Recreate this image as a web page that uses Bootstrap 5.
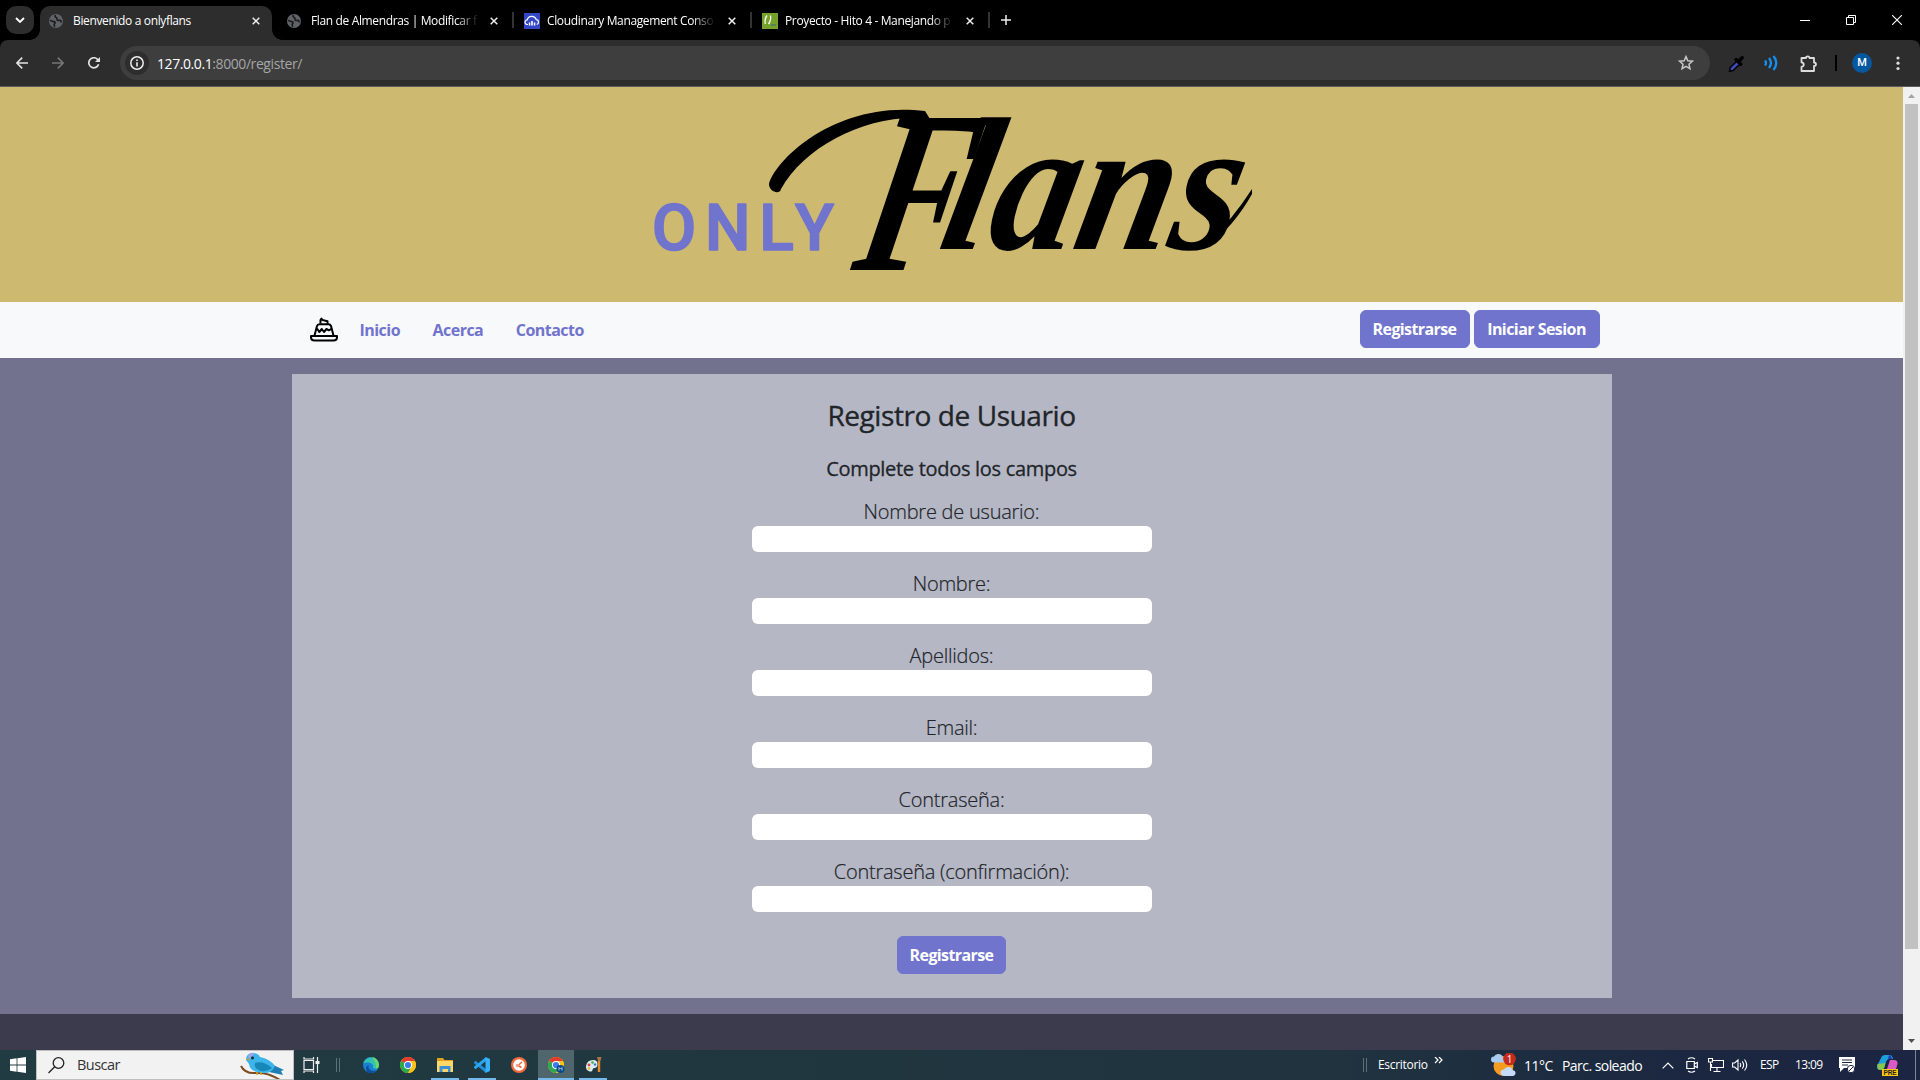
<!DOCTYPE html>
<html lang="es">
<head>
<meta charset="utf-8">
<meta name="viewport" content="width=device-width, initial-scale=1">
<title>Bienvenido a onlyflans</title>
<link href="https://cdn.jsdelivr.net/npm/bootstrap@5.3.0/dist/css/bootstrap.min.css" rel="stylesheet">
<style>
body{font-family:"Open Sans","Noto Sans",sans-serif;width:1920px;height:1080px;overflow:hidden;background:#000}
svg{display:block;flex:none}
/* browser tabs */
.tabstrip{height:40px;padding-left:6px;background:#000;color:#fff}
.tabsearch{width:28px;height:28px;margin:6px 6px 0 0;border-radius:10px;background:#2d2d2d}
.btab{position:relative;width:232px;height:34px;margin:6px 6px 0 0;padding:0 0 5px 9px;font-size:12px}
.btab.on{background:#2d2d2d;border-radius:10px 10px 0 0}
.btab.on::before,.btab.on::after{content:"";position:absolute;bottom:0;width:10px;height:10px}
.btab.on::before{left:-10px;background:radial-gradient(circle at 0 0,transparent 9.5px,#2d2d2d 10px)}
.btab.on::after{right:-10px;background:radial-gradient(circle at 100% 0,transparent 9.5px,#2d2d2d 10px)}
.btab.rule::after{content:"";position:absolute;right:-4px;top:6px;width:2px;height:16px;background:#333}
.btab.wide-ico{padding-left:8px}
.btab.wide-ico .ttl{margin-left:7px;width:169px}
.ttl{width:167px;margin:0 12px 0 10px;white-space:nowrap;overflow:hidden;letter-spacing:-.36px}
.fade-end{-webkit-mask-image:linear-gradient(90deg,#000 145px,transparent 168px)}
.newtab{margin:15px 0 0 9px}
.wctl{width:46px;padding-top:15px}
.wctl.low{padding-top:20px}
/* toolbar */
.toolbar{height:47px;background:#2d2d2d;border-bottom:1px solid #5c5c5c;border-radius:8px 8px 0 0;padding-left:16px}
.navico{margin-right:24px}
.pill{width:1590px;height:34px;border-radius:17px;background:#3e3e3e;padding:0 16px 0 5px;font-size:14px;letter-spacing:-.42px;color:#a5a5a5;margin-left:-4px;margin-right:18px}
.info{width:24px;height:24px;border-radius:50%;background:#2d2d2d;margin-right:8px}
.vline{width:2px;height:16px;background:#000;margin:0 15px 0 17px}
.ava{width:20px;height:20px;border-radius:50%;background:#0458a0;color:#fff;font:500 11px/20px Roboto,sans-serif;margin-right:24px}
/* page */
.viewport{height:963px}
.pagecol{width:1903px}
.hero{height:215px;background:#cdb970}
.sitenav{height:56px;background:#f8f9fa;padding:8px 0}
.flan{margin:-2px 22px 0 18px}
.sitenav .links{gap:32.5px}
.sitenav .nav-link{color:#7074cd;font-weight:700;padding:8px 0;letter-spacing:-.53px}
.sitenav .acts{gap:4px;margin:-2px 12px 0 0}
.inner{width:1320px}
.btn-of,.btn-of:hover{background:#7074cd;color:#fff;font-weight:700;border-color:#7074cd;padding-left:0;padding-right:0;width:109px;letter-spacing:-.6px}
.acts .btn-of{width:110px}
.acts .btn-of.long{width:126px;letter-spacing:-.55px}
.pagemain{height:656px;background:#72728e;padding:16px 0}
.panel{height:624px;background:#b5b7c5;padding:25px 0 24px;color:#212529}
.panel h3{font-size:28px;margin-bottom:24px;letter-spacing:-.42px;-webkit-text-stroke:.35px #212529}
.panel h5{font-size:20px;margin-bottom:15px;line-height:24px;letter-spacing:-.3px;-webkit-text-stroke:.3px #212529}
.fld{height:56px;margin-bottom:16px;font-size:20px;font-weight:300;letter-spacing:-.24px;-webkit-text-stroke:.2px #212529}
.fld label{height:30px;line-height:32px}
.fld input{width:400px;height:26px;border:0;border-radius:6px;background:#fff}
.fld:last-of-type{margin-bottom:24px}
.foot{height:36px;background:#3c3b4d}
.vbar{width:17px;background:#f1f1f1;padding:7px 2px}
.thumb{width:13px;height:845px;background:#c1c1c1;margin-top:6px}
/* taskbar */
.taskbar{height:30px;background:linear-gradient(90deg,#213b43,#20373f 35%,#20333f 70%,#1b2741 88%,#1c2542);color:#fff}
.start{width:36px}
.find{width:258px;height:30px;background:#f2f2f2;border:1px solid #bfbfbf;color:#333;font-size:14.5px;letter-spacing:-.55px;padding:0 8px 0 11px}
.find span{margin-left:12px}
.tview{margin:0 16px 0 9px}
.apps{margin-left:13px;gap:1px}
.app{width:36px;height:30px}
.app.run{background:linear-gradient(#76b9ed,#76b9ed) bottom/28px 2px no-repeat}
.app.act{background:linear-gradient(#76b9ed,#76b9ed) bottom/36px 2px no-repeat #50666d}
.grip{width:4px;height:14px;border:solid #5c7078;border-width:0 1px}
.tray{white-space:nowrap;font-size:12px}
.tray .desk{width:57px;margin-left:11px;letter-spacing:-.3px}
.more{margin:-10px 0 0 -1px}
.tray .temp{font-size:14px;letter-spacing:-.5px;width:38px;margin-left:8px}
.tray .sky{font-size:14px;letter-spacing:-.55px;width:100px}
.tray .lang{width:35px;margin-left:12px;letter-spacing:-.6px}
.tray .clock{width:44px;letter-spacing:-.65px}
.copilot{margin:0 17px 0 22px}
.showdesk{width:5px;height:30px;border-left:1px solid #7d8596}
.g8{margin-left:8px}.g10{margin-left:10px}.g12{margin-left:12px}
</style>
</head>
<body>
<svg width="0" height="0" class="position-absolute">
<defs>
<symbol id="x" viewBox="0 0 8 8"><path d="M.7.7l6.6 6.6M7.3.7L.7 7.3" stroke="#eee" stroke-width="1.5"/></symbol>
<symbol id="globe" viewBox="0 0 14 14"><circle cx="7" cy="7" r="7" fill="#5f6368"/><path d="M1 6.500c2 0 2.500 1 4 1.200 1.500.3 1.200 1.500.3 2.300-.7.7 0 1.800.6 2.700M6.500 1c-.8 1.200-.4 2 .7 2.600 1.400.7.3 2 1.300 2.700 1 .6 1.800-.4 3 .2.700.4.7 1.200.5 1.900" stroke="#1d1d1d" stroke-width="1.700" fill="none"/></symbol>
<symbol id="chrome" viewBox="0 0 16 16"><circle cx="8" cy="8" r="8" fill="#fbc116"/><path d="M8 8L1.070 4A8 8 0 0 1 14.930 4z" fill="#e33b2e"/><path d="M8 8L1.070 4A8 8 0 0 0 8 16l3.500-6z" fill="#2da94f"/><path d="M8 4h6.930A8 8 0 0 1 8 16l3.500-6z" fill="#fbc116"/><circle cx="8" cy="8" r="4" fill="#fff"/><circle cx="8" cy="8" r="3.100" fill="#3b7ded"/></symbol>
</defs></svg>

<!-- tab strip -->
<div class="tabstrip d-flex">
 <div class="tabsearch d-flex align-items-center justify-content-center"><svg width="10" height="6" viewBox="0 0 10 6"><path d="M1 1l4 4 4-4" fill="none" stroke="#fff" stroke-width="1.800"/></svg></div>
 <div class="btab on d-flex align-items-center"><svg width="14" height="14"><use href="#globe"/></svg><span class="ttl">Bienvenido a onlyflans</span><svg width="8" height="8"><use href="#x"/></svg></div>
 <div class="btab rule d-flex align-items-center"><svg width="14" height="14"><use href="#globe"/></svg><span class="ttl fade-end">Flan de Almendras | Modificar f</span><svg width="8" height="8"><use href="#x"/></svg></div>
 <div class="btab rule wide-ico d-flex align-items-center"><svg width="16" height="16" viewBox="0 0 16 16"><path fill="#3448c5" d="M0 0h16v16H0z"/><path d="M4 11.500H3.500a2.300 2.300 0 0 1-.3-4.600A4.800 4.800 0 0 1 12.300 6.600a2.500 2.500 0 0 1 .4 4.900" fill="none" stroke="#fff" stroke-width="1.200"/><path d="M4.800 9.500h1.500v3H4.800zM7.200 8h1.600v4.500H7.200zM9.800 9.500h1.500v3H9.800z" fill="#fff"/></svg><span class="ttl fade-end">Cloudinary Management Conso</span><svg width="8" height="8"><use href="#x"/></svg></div>
 <div class="btab rule wide-ico d-flex align-items-center"><svg width="16" height="16" viewBox="0 0 16 16"><path fill="#76a22c" d="M0 0h16v16H0z"/><path d="M5 2.500Q2.300 6 3.300 11M8.500 2.500q.8 5-2 8.500" fill="none" stroke="#fff" stroke-width="1.300"/><path d="M9 12h5" stroke="#4c7d6b" stroke-width="1.600"/></svg><span class="ttl fade-end">Proyecto - Hito 4 - Manejando p</span><svg width="8" height="8"><use href="#x"/></svg></div>
 <svg class="newtab" width="10" height="10" viewBox="0 0 10 10"><path d="M5 0v10M0 5h10" stroke="#eee" stroke-width="1.500"/></svg>
 <div class="d-flex ms-auto">
  <div class="wctl low d-flex justify-content-center"><svg width="10" height="1"><path d="M0 .5h10" stroke="#fff"/></svg></div>
  <div class="wctl d-flex justify-content-center"><svg width="10" height="10" viewBox="0 0 10 10"><path d="M.5 2.500h7v7h-7zM2.500 2V.5h7v7H8" fill="none" stroke="#fff"/></svg></div>
  <div class="wctl d-flex justify-content-center"><svg width="10" height="10" viewBox="0 0 10 10"><path d="M0 0l10 10M10 0L0 10" stroke="#fff" stroke-width="1.100"/></svg></div>
 </div>
</div>

<!-- toolbar -->
<div class="toolbar d-flex align-items-center">
 <svg class="navico" width="12" height="12" viewBox="0 0 12 12"><path d="M12 6H1M6.200.6L.9 6l5.300 5.400" fill="none" stroke="#e3e3e3" stroke-width="1.600"/></svg>
 <svg class="navico" width="12" height="12" viewBox="0 0 12 12"><path d="M0 6h11M5.800.6L11.100 6l-5.300 5.400" fill="none" stroke="#777" stroke-width="1.600"/></svg>
 <svg class="navico" width="12" height="12" viewBox="0 0 12 12"><path d="M10.600 7.200A5 5 0 1 1 9.600 2.500L11 4" fill="none" stroke="#e3e3e3" stroke-width="1.700"/><path d="M12 0v5H7z" fill="#e3e3e3"/></svg>
 <div class="pill d-flex align-items-center">
  <div class="info d-flex align-items-center justify-content-center"><svg width="14" height="14" viewBox="0 0 14 14"><circle cx="7" cy="7" r="6.200" fill="none" stroke="#eee" stroke-width="1.500"/><path d="M7 6.200v4.200M7 3.500v1.500" stroke="#eee" stroke-width="1.600"/></svg></div>
  <span><span class="text-white">127.0.0.1</span>:8000/register/</span>
  <svg class="ms-auto" width="16" height="16" viewBox="0 0 16 16"><path d="M8 1.600l1.850 4.200 4.550.42-3.440 3.030 1 4.500L8 11.380l-3.960 2.370 1-4.500L1.600 6.220l4.550-.42z" fill="none" stroke="#c7c7c7" stroke-width="1.500"/></svg>
 </div>
 <svg width="17" height="17" viewBox="0 0 17 17"><path d="M9.500 5.500l3 3L5 15.500l-3.500.8.7-3.600z" fill="#3c4cc0" stroke="#050505" stroke-width="1.500"/><path d="M8 4.500l4.700 4.700M11 6l3.300-3.300" stroke="#000" stroke-width="3.400" stroke-linecap="round"/></svg>
 <svg class="ms-3" width="20" height="16" viewBox="-3 0 20 16"><path d="M1 5.500q2 2.500 0 5M5 3q4 5 0 10M9.500 1q5.500 7 0 14" fill="none" stroke="#1590f0" stroke-width="2.300"/></svg>
 <svg class="ms-3" style="margin-left:19px!important" width="18" height="17" viewBox="0 0 18 17"><path d="M1.500 3H6c0-2.300 3.500-2.300 3.500 0H14v4.500c2.600 0 2.600 3.500 0 3.500v5H1.500v-4.200C4.500 11.500 4.500 7.500 1.500 7.300z" fill="none" stroke="#ddd" stroke-width="1.800" stroke-linejoin="round"/></svg>
 <div class="vline"></div>
 <div class="ava text-center">M</div>
 <svg width="4" height="16" viewBox="0 0 4 16"><g fill="#ddd"><circle cx="2" cy="3" r="1.600"/><circle cx="2" cy="8.200" r="1.600"/><circle cx="2" cy="13.500" r="1.600"/></g></svg>
</div>

<!-- page -->
<div class="viewport d-flex">
 <div class="pagecol">
  <header class="hero d-flex justify-content-center">
   <svg width="640" height="215" viewBox="632 87 640 215">
    <text x="652" y="250" font-family="Roboto" font-weight="500" font-size="64" fill="#7074cd" textLength="182" stroke="#7074cd" stroke-width="1.600" stroke-linejoin="round">ONLY</text>
    <g font-family="Liberation Serif" font-style="italic" font-weight="700" fill="#000">
     <text transform="translate(850 270) skewX(-12) scale(.7 1)" font-size="232">F</text>
     <text transform="translate(936 249) skewX(-12)" font-size="190" textLength="296" lengthAdjust="spacingAndGlyphs">lans</text>
    </g>
    <path d="M769 184C776 158 838 100 925 111L930 119C872 112 806 144 781 189C780 195 769 192 769 184z"/>
    <path d="M1210 240Q1232 220 1252 189V194Q1234 226 1208 246z"/>
   </svg>
  </header>
  <nav class="sitenav">
   <div class="inner mx-auto d-flex align-items-center">
    <svg class="flan" width="28" height="25" viewBox="0 0 28 25"><g fill="none" stroke="#000" stroke-width="2" stroke-linejoin="round"><path d="M4.500 18.500L7 9Q7.500 7.200 9.500 7.200h9q1.700 0 2.500 1.800l2.500 9.500"/><path d="M7 11.500l2.300 3.500 2.500-3 2.200 3 2.500-3 2.400 1.300 3.100-1.800"/><path d="M10.500 6.500V3l1-1.500 1 1.500 5 1.200v2.500"/><path d="M1 19h26v1.500q0 3-3.500 3H4.500q-3.500 0-3.500-3z"/></g></svg>
    <div class="links d-flex"><a class="nav-link">Inicio</a><a class="nav-link">Acerca</a><a class="nav-link">Contacto</a></div>
    <div class="acts ms-auto d-flex"><a class="btn btn-of">Registrarse</a><a class="btn btn-of long">Iniciar Sesion</a></div>
   </div>
  </nav>
  <main class="pagemain">
   <form class="panel inner mx-auto d-flex flex-column align-items-center">
    <h3>Registro de Usuario</h3>
    <h5>Complete todos los campos</h5>
    <div class="fld d-flex flex-column align-items-center"><label>Nombre de usuario:</label><input></div>
    <div class="fld d-flex flex-column align-items-center"><label>Nombre:</label><input></div>
    <div class="fld d-flex flex-column align-items-center"><label>Apellidos:</label><input></div>
    <div class="fld d-flex flex-column align-items-center"><label>Email:</label><input></div>
    <div class="fld d-flex flex-column align-items-center"><label>Contraseña:</label><input></div>
    <div class="fld d-flex flex-column align-items-center"><label>Contraseña (confirmación):</label><input></div>
    <button type="button" class="btn btn-of">Registrarse</button>
   </form>
  </main>
  <footer class="foot"></footer>
 </div>
 <div class="vbar d-flex flex-column align-items-center">
  <svg width="7" height="4"><path d="M0 4l3.500-4L7 4z" fill="#a3a3a3"/></svg>
  <div class="thumb"></div>
  <svg class="mt-auto" width="7" height="4"><path d="M0 0h7L3.500 4z" fill="#505050"/></svg>
 </div>
</div>

<!-- taskbar -->
<div class="taskbar d-flex align-items-center">
 <div class="start d-flex justify-content-center"><svg width="16" height="16" viewBox="0 0 16 16"><path d="M0 2.200l6.600-.9v6.300H0zM7.400 1.200L16 0v7.600H7.400zM0 8.400h6.600v6.300L0 13.800zM7.400 8.400H16V16l-8.600-1.200z" fill="#fff"/></svg></div>
 <div class="find d-flex align-items-center">
  <svg width="17" height="17" viewBox="0 0 17 17"><circle cx="10.500" cy="6" r="5.300" fill="none" stroke="#222" stroke-width="1.300"/><path d="M6.700 9.800L.5 16" stroke="#222" stroke-width="1.300"/></svg>
  <span>Buscar</span>
  <svg class="ms-auto" width="46" height="28" viewBox="238 1051 46 28"><path d="M240 1066q4 8 15 7 12-1 24 7" fill="none" stroke="#7b4a1e" stroke-width="2"/><path d="M268 1063l15 7-3 1 2 4-14-3z" fill="#1f7fb5"/><path d="M245 1060q0-7 7-7 5 0 7 4 10 2 15 9-3 8-13 7-12-1-13-9z" fill="#3db4ea"/><path d="M254 1063q8-3 17 5-8 6-15 1-3-2-2-6z" fill="#1787b8"/><path d="M247 1056q2-4 6-3-1 4-5 6z" fill="#9fa5e8"/><circle cx="251.500" cy="1058" r="1.400" fill="#123"/><path d="M248 1058l-3.500 1.500 4 1.200z" fill="#c89a3c"/><path d="M256 1072v3M260 1072v3" stroke="#d9a62e" stroke-width="1.500"/></svg>
 </div>
 <svg class="tview" width="17" height="16" viewBox="0 0 17 16"><g fill="none" stroke="#eee" stroke-width="1.200"><path d="M1 3.500h9.500v9H1zM1 0v2h9.500V0M1 16v-2h9.500v2M14.500 0v16"/></g><path d="M12.500 4h4v3h-4z" fill="#eee"/></svg>
 <div class="grip"></div>
 <div class="apps d-flex">
  <div class="app d-flex align-items-center justify-content-center"><svg width="16" height="16" viewBox="0 0 16 16"><circle cx="8" cy="8" r="8" fill="#1b7fd0"/><path d="M.3 6.500A8 8 0 0 1 16 8c0 2.600-2 4-4.500 3.600-2-.4-1.500-1.500-1.400-2.600C10 6 4 4.500.3 6.500z" fill="#35c1b0"/><path d="M9 .1A8 8 0 0 1 16 8c0 2-1 3.200-3 3.600.5-5-2-9-4-11.500z" fill="#6bd76b"/><path d="M5.500 8.500c-.5 4 3 6.500 8 5A8 8 0 0 1 4 15C2 11 3.500 8.500 5.500 8.500z" fill="#0c4f9e"/></svg></div>
  <div class="app d-flex align-items-center justify-content-center"><svg width="16" height="16"><use href="#chrome"/></svg></div>
  <div class="app run d-flex align-items-center justify-content-center"><svg width="16" height="14" viewBox="0 0 16 14"><path d="M0 0h6l1.500 2H16v12H0z" fill="#e2a11b"/><path d="M0 3h16v11H0z" fill="#ffd667"/><path d="M2.500 14V8h11v6H11v-3H5.500v3z" fill="#3b8fd6"/></svg></div>
  <div class="app run d-flex align-items-center justify-content-center"><svg width="16" height="16" viewBox="0 0 16 16"><path d="M0 5.200l1.500-1.400L12 12v4L0 6.300z" fill="#1f8fdc"/><path d="M0 10.800l1.500 1.400L12 4V0L0 9.700z" fill="#2aa5f0"/><path d="M11.500 0L16 2v12l-4.500 2z" fill="#36b0f7"/></svg></div>
  <div class="app d-flex align-items-center justify-content-center"><svg width="16" height="16" viewBox="0 0 16 16"><circle cx="8" cy="8" r="8" fill="#f26b3c"/><circle cx="8" cy="8" r="5.800" fill="#fff"/><path d="M11 5L7 8.500l3.500 2" fill="none" stroke="#e5673a" stroke-width="1.500"/><circle cx="6.500" cy="8.500" r="1.800" fill="#f0a08a"/></svg></div>
  <div class="app act d-flex align-items-center justify-content-center"><svg width="17" height="16" viewBox="0 0 17 16"><use href="#chrome" width="16" height="16"/><circle cx="12.500" cy="12" r="4" fill="#0a4a8c"/><path d="M11 13.500v-3l1.500 1.500 1.500-1.500v3" fill="none" stroke="#cde" stroke-width=".8"/></svg></div>
  <div class="app run d-flex align-items-center justify-content-center"><svg width="17" height="16" viewBox="0 0 17 16"><path d="M1 9q1-6 7-6 5 0 4.500 5-.5 3-3 3-2 0-2 2t-3 1.500Q.5 13 1 9z" fill="#dcebf2"/><circle cx="4" cy="8" r="1.400" fill="#e0453a"/><circle cx="7.500" cy="5.500" r="1.300" fill="#49a942"/><circle cx="10" cy="7.500" r="1.200" fill="#2d7fd0"/><circle cx="4" cy="11.500" r="1.300" fill="#f0b429"/><path d="M14 4v11" stroke="#e08a2b" stroke-width="2.400"/><path d="M12 0h4.500l-1 4h-2.500z" fill="#a87445"/></svg></div>
 </div>
 <div class="tray ms-auto d-flex align-items-center">
  <div class="grip"></div>
  <span class="desk">Escritorio</span>
  <svg class="more" width="57" height="7" viewBox="0 0 57 7"><path d="M1 0l3 3-3 3M5 0l3 3-3 3" fill="none" stroke="#fff" stroke-width="1.200"/></svg>
  <svg width="25" height="24" viewBox="0 0 25 24"><circle cx="12.500" cy="13" r="10" fill="#f49b20"/><path d="M3 9.500q-3 0-3-3t3-3q1.500-3 5-2.500t4 3.500q3 1 2 5z" fill="#a9cbf0"/><path d="M13 23q-3.500-.5-3.500-3.500t3.500-3q1.500-3 5-2.500t3.500 3q3 .5 3 3t-3 3z" fill="#c6dbf7"/><circle cx="18.500" cy="6" r="6.300" fill="#c42b1c"/><text x="18.500" y="9.700" text-anchor="middle" font-size="10" fill="#fff" font-family="Open Sans">1</text></svg>
  <span class="temp">11°C</span>
  <span class="sky">Parc. soleado</span>
  <svg width="12" height="7" viewBox="0 0 12 7"><path d="M.7 6.300L6 1l5.300 5.300" fill="none" stroke="#fff" stroke-width="1.200"/></svg>
  <svg class="g12" width="12" height="16" viewBox="0 0 12 16"><path d="M.8 4.500h7.500v7H.8zM8.300 7l3-1.500v5l-3-1.500M2 2Q5.500-.5 9 2M2 14q3.500 2.500 7 0" fill="none" stroke="#fff" stroke-width="1.200"/></svg>
  <svg class="g10" width="16" height="14" viewBox="0 0 16 14"><path d="M4 2.500h11.500v7H3.500V6M9 10v3M5.500 13.500h7M.5.500h4v3.500h-4zM2.500 4v9" fill="none" stroke="#fff" stroke-width="1.100"/></svg>
  <svg class="g8" width="16" height="14" viewBox="0 0 16 14"><path d="M.6 5v4h2L6 12V2L2.600 5zM8 5q1.500 2 0 4M10.200 3.300q3 3.700 0 7.400M12.500 1.500q4.500 5.500 0 11" fill="none" stroke="#fff" stroke-width="1.100"/></svg>
  <span class="lang">ESP</span>
  <span class="clock">13:09</span>
  <svg width="16" height="16" viewBox="0 0 16 16"><path d="M0 0h16v11H5l-4 4v-4H0z" fill="#fff"/><path d="M3 3h10M3 5.500h10M3 8h6" stroke="#1b2741" stroke-width="1.100"/><circle cx="12" cy="12" r="3.700" fill="#fff" stroke="#1b2741"/><path d="M10 14l4-4" stroke="#1b2741"/></svg>
  <svg class="copilot" width="21" height="21" viewBox="0 0 21 21"><path d="M4 3q1-3 4-3h5q2 0 3 4h-4q-2 0-3 3l-2 6q-1 2-4 2-4 0-2.500-5z" fill="#1fa0dd"/><path d="M.5 9q-1 6 3.500 6 2.500 0 3.500-3l1-4z" fill="#8ac64b"/><path d="M12 0q2 0 3 4h-4z" fill="#1d3fb0"/><path d="M13 5h4q4 0 3.500 4l-1.500 5H10z" fill="#d95bc5"/><path d="M5 14h16v7H5z" fill="#ffc80a"/><text x="6.500" y="20" font-size="6.500" font-weight="700" textLength="13" font-family="Liberation Sans" fill="#222">PRE</text></svg>
  <div class="showdesk"></div>
 </div>
</div>
<script src="https://cdn.jsdelivr.net/npm/bootstrap@5.3.0/dist/js/bootstrap.bundle.min.js"></script>
</body>
</html>
